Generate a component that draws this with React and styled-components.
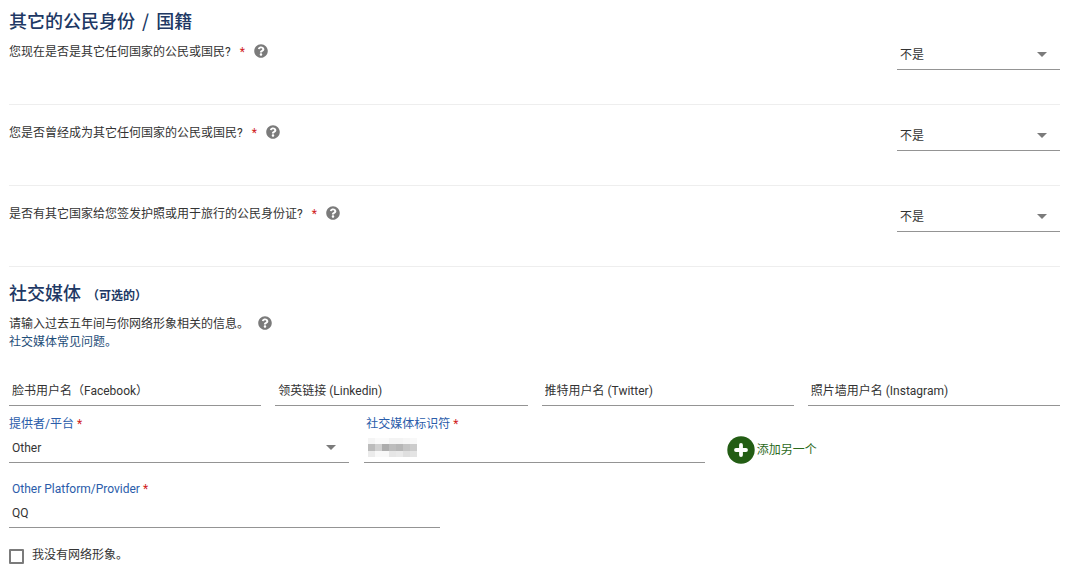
import React from 'react';
import styled, { createGlobalStyle } from 'styled-components';
import { FaQuestionCircle } from 'react-icons/fa';

const colors = {
	text: '#333333',
	heading: '#203864',
	label: '#2a5caa',
	link: '#1f4e79',
	line: '#949494',
	divider: '#eeeeee',
	required: '#d0211c',
	icon: '#7b7b7b',
	green: '#235d14',
	greenText: '#2c6a1c',
};

const questions = [
	{ id: 'citizen-now', text: '您现在是否是其它任何国家的公民或国民?' },
	{ id: 'citizen-before', text: '您是否曾经成为其它任何国家的公民或国民?' },
	{ id: 'other-passport', text: '是否有其它国家给您签发护照或用于旅行的公民身份证?' },
];

const accounts = [
	{ id: 'facebook', text: '脸书用户名（Facebook）' },
	{ id: 'linkedin', text: '领英链接 (Linkedin)' },
	{ id: 'twitter', text: '推特用户名 (Twitter)' },
	{ id: 'instagram', text: '照片墙用户名 (Instagram)' },
];

// colours of the masked value, one row of blocks after another
const mask = [
	['#f4f4f4', '#fafafa', '#fafafa', '#f3f3f3', '#f3f3f3', '#f6f6f6', '#f8f8f8'],
	['#bcbcbc', '#d0d0d0', '#adadad', '#bcbcbc', '#b6b6b6', '#c4c4c4', '#cccccc'],
	['#ebebeb', '#f8f8f8', '#f8f8f8', '#e6e6e6', '#e9e9e9', '#dfdfdf', '#e4e4e4'],
];

const GlobalStyle = createGlobalStyle`
	* {
		box-sizing: border-box;
	}
	body {
		margin: 0;
		background: #ffffff;
	}
	body, input, select, button {
		color: ${colors.text};
		font-family: Roboto, 'Noto Sans CJK SC', sans-serif;
		font-size: 12px;
		line-height: 18px;
	}
`

const Page = styled.main`
	padding: 8px 20px 12px 9px;
`

const Heading = styled.h2`
	margin: 0 0 ${props => props.$gap};
	color: ${colors.heading};
	font-family: 'Noto Sans CJK SC', sans-serif;
	font-size: 18px;
	font-weight: 500;
	line-height: 24px;
	small {
		margin-left: 6px;
		font-size: 12px;
		font-weight: 700;
		line-height: 12px;
	}
`

const Slash = styled.span`
	margin: 0 3px;
`

const Question = styled.div`
	display: flex;
	justify-content: space-between;
	align-items: flex-start;
	padding-bottom: 34px;
	border-bottom: 1px solid ${colors.divider};
	& + & {
		padding-top: 16px;
	}
`

const QuestionText = styled.div`
	display: flex;
	align-items: center;
	gap: 9px;
	padding-top: 3px;
`

const Required = styled.span`
	color: ${colors.required};
`

const HelpButton = styled.button`
	display: flex;
	margin-bottom: 3px;
	padding: 0;
	border: 0;
	background: none;
	color: ${colors.icon};
	font-size: 14px;
	cursor: pointer;
`

const SelectBox = styled.div`
	position: relative;
	width: ${props => props.$width || '100%'};
	&::after {
		content: '';
		position: absolute;
		top: 12px;
		right: 13px;
		border: 5px solid transparent;
		border-top-color: ${colors.icon};
		border-bottom: 0;
		pointer-events: none;
	}
`

const Select = styled.select`
	display: block;
	width: 100%;
	height: 30px;
	padding: 0 28px 0 3px;
	border: 0;
	border-bottom: 1px solid ${colors.line};
	border-radius: 0;
	background: none;
	appearance: none;
	outline: none;
`

const Input = styled.input`
	display: block;
	width: 100%;
	height: 30px;
	padding: 0 3px;
	border: 0;
	border-bottom: 1px solid ${colors.line};
	border-radius: 0;
	background: none;
	outline: none;
	&::placeholder {
		color: ${colors.text};
		opacity: 1;
	}
`

const Social = styled.section`
	padding-top: 13px;
`

const Intro = styled.div`
	display: flex;
	align-items: center;
	gap: 9px;
`

const FaqLink = styled.a`
	display: block;
	width: fit-content;
	color: ${colors.link};
	text-decoration: none;
`

const Accounts = styled.div`
	display: grid;
	grid-template-columns: repeat(4, 1fr);
	grid-gap: 14px;
	margin-top: 25px;
`

const Provider = styled.div`
	display: grid;
	grid-template-columns: repeat(3, 1fr);
	grid-gap: 15px;
	margin-top: 9px;
`

const Label = styled.label`
	display: block;
	padding-left: ${props => props.$indent || '0'};
	color: ${colors.label};
`

const Masked = styled.div`
	position: relative;
	svg {
		position: absolute;
		top: 5px;
		left: 4px;
		pointer-events: none;
	}
`

const AddButton = styled.button`
	display: flex;
	align-items: center;
	gap: 2px;
	align-self: end;
	justify-self: start;
	margin: 0 0 -1px 7px;
	padding: 0;
	border: 0;
	background: none;
	color: ${colors.greenText};
	cursor: pointer;
`

const OtherPlatform = styled.div`
	width: 41%;
	margin-top: 17px;
`

const CheckLabel = styled.label`
	display: flex;
	align-items: center;
	gap: 8px;
	margin-top: 18px;
`

const Checkbox = styled.input`
	width: 15px;
	height: 15px;
	margin: 2px 0 0;
	border: 2px solid ${colors.icon};
	border-radius: 1px;
	background: #ffffff;
	appearance: none;
	&:checked {
		background: ${colors.label};
	}
`

const Help = () => (
	<HelpButton type="button" aria-label="帮助">
		<FaQuestionCircle />
	</HelpButton>
)

const App = () => {
	return (
		<>
			<GlobalStyle />
			<Page>
				<section>
					<Heading $gap="8px">其它的公民身份 <Slash>/</Slash> 国籍</Heading>
					{ questions.map(item =>
						<Question key={item.id}>
							<QuestionText>
								<label htmlFor={item.id}>{item.text}</label>
								<Required>*</Required>
								<Help />
							</QuestionText>
							<SelectBox $width="163px">
								<Select id={item.id} defaultValue="no">
									<option value="no">不是</option>
									<option value="yes">是</option>
								</Select>
							</SelectBox>
						</Question>
					)}
				</section>

				<Social>
					<Heading $gap="11px">社交媒体<small>（可选的）</small></Heading>
					<Intro>
						<span>请输入过去五年间与你网络形象相关的信息。</span>
						<Help />
					</Intro>
					<FaqLink href="#faq">社交媒体常见问题。</FaqLink>

					<Accounts>
						{ accounts.map(item =>
							<Input key={item.id} id={item.id} placeholder={item.text} aria-label={item.text} />
						)}
					</Accounts>

					<Provider>
						<div>
							<Label htmlFor="provider">提供者/平台 <Required>*</Required></Label>
							<SelectBox>
								<Select id="provider" defaultValue="other">
									<option value="other">Other</option>
								</Select>
							</SelectBox>
						</div>
						<div>
							<Label htmlFor="identifier" $indent="2px">社交媒体标识符 <Required>*</Required></Label>
							<Masked>
								<Input id="identifier" />
								<svg width="49" height="19" shapeRendering="crispEdges" aria-hidden="true">
									{ mask.map((row, y) => row.map((fill, x) =>
										<rect key={`${x}-${y}`} x={x * 7} y={y ? y * 7 - 1 : 0} width="7" height="7" fill={fill} />
									))}
								</svg>
							</Masked>
						</div>
						<AddButton type="button">
							<svg width="28" height="28" viewBox="0 0 28 28" aria-hidden="true">
								<circle cx="14" cy="14" r="13.7" fill={colors.green} />
								<path d="M14 9v10M9 14h10" stroke="#fff" strokeWidth="3.8" strokeLinecap="round" />
							</svg>
							添加另一个
						</AddButton>
					</Provider>

					<OtherPlatform>
						<Label htmlFor="platform" $indent="3px">Other Platform/Provider <Required>*</Required></Label>
						<Input id="platform" defaultValue="QQ" />
					</OtherPlatform>

					<CheckLabel>
						<Checkbox type="checkbox" />
						我没有网络形象。
					</CheckLabel>
				</Social>
			</Page>
		</>
	);
}

export default App;
